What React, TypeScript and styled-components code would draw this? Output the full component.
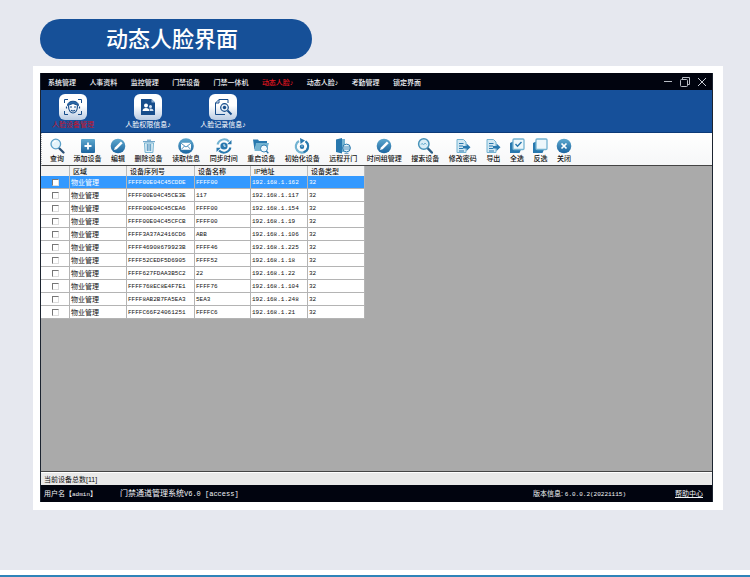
import React, { useState } from 'react';
import styled, { createGlobalStyle } from 'styled-components';

const GlobalStyle = createGlobalStyle`
  * { box-sizing: border-box; }
  body {
    margin: 0;
    background: #e6e8ef;
    font-family: "Liberation Sans", "Noto Sans CJK SC", sans-serif;
  }
  button { font: inherit; color: inherit; border: 0; padding: 0; background: none; cursor: pointer; }
`;

const Page = styled.div`
  min-height: 100vh;
  display: flex;
  flex-direction: column;
`;

const Content = styled.main`
  flex: 1;
  display: flex;
  flex-direction: column;
  padding: 19px 27px 60px 33px;
`;

const Heading = styled.h1`
  align-self: flex-start;
  width: 272px;
  height: 40px;
  margin: 0 0 7px 7px;
  padding-right: 8px;
  border-radius: 20px;
  background: #165098;
  color: #fff;
  font-size: 22px;
  font-weight: 500;
  line-height: 42px;
  text-align: center;
`;

const Card = styled.section`
  flex: 1;
  display: flex;
  padding: 7px 10px 8px 7px;
  background: #fff;
`;

const Window = styled.div`
  flex: 1;
  min-width: 0;
  display: flex;
  flex-direction: column;
  border: solid #1c2430;
  border-width: 0 1px;
  font-size: 7px;
  line-height: 9px;
  white-space: nowrap;
`;

const TitleBar = styled.header`
  display: flex;
  align-items: center;
  justify-content: space-between;
  height: 17px;
  padding: 1px 5px 0 7px;
  background: #01040f;
  color: #f2f4f8;
`;

const Menu = styled.nav`
  flex: 0 1 373px;
  display: flex;
  justify-content: space-between;
`;

const MenuItem = styled.button<{ $active?: boolean }>`
  color: ${(p) => (p.$active ? '#e01620' : 'inherit')};
  font-weight: 500;
`;

const Controls = styled.div`
  display: flex;
  gap: 7px;
  button { display: flex; }
`;

const Ribbon = styled.nav`
  display: flex;
  align-items: flex-start;
  gap: 11px;
  height: 43px;
  padding-top: 4px;
  background: #16509a;
  border-bottom: 1px solid #0c3a78;
`;

const RibbonItem = styled.button<{ $active?: boolean }>`
  display: flex;
  flex-direction: column;
  align-items: center;
  width: 64px;
  color: ${(p) => (p.$active ? '#c5142c' : '#fff')};
`;

const IconTile = styled.span`
  display: flex;
  align-items: center;
  justify-content: center;
  width: 28px;
  height: 26px;
  border-radius: 6px;
  background: linear-gradient(#fff 45%, #b9cbe2);
`;

const Toolbar = styled.div`
  height: 33px;
  padding: 5px 8px 0;
  border-left: 1px dotted #b8b8b8;
  border-bottom: 1px solid #444;
  background: linear-gradient(#fff, #f6f7f8);
  color: #111;
`;

const Tools = styled.div`
  display: flex;
  justify-content: space-between;
  max-width: 521px;
`;

const Tool = styled.button`
  display: flex;
  flex-direction: column;
  align-items: center;
  font-weight: 500;
  svg { margin: 0 -1px; }
`;

const Workspace = styled.div`
  flex: 1;
  background: #aaa;
  border-bottom: 1px solid #444;
`;

const Table = styled.table`
  width: 324px;
  table-layout: fixed;
  border-collapse: separate;
  border-spacing: 0;
  color: #111;
`;

const Column = styled.col<{ $width: number }>`
  width: ${(p) => p.$width}px;
`;

const HeadCell = styled.th`
  height: 10px;
  padding: 0 0 0 3px;
  border-right: 1px solid #bbb;
  background: #f3f3f3;
  font-weight: 500;
  line-height: 9px;
  text-align: left;
`;

const Row = styled.tr<{ $selected: boolean }>`
  background: ${(p) => (p.$selected ? '#3399ff' : '#fff')};
  color: ${(p) => (p.$selected ? '#fff' : '#111')};
`;

const Cell = styled.td`
  height: 13px;
  padding: 0 0 0 1px;
  border: solid #b4b4b4;
  border-width: 0 1px 1px 0;
  line-height: 11px;
  overflow: hidden;
`;

const CheckCell = styled(Cell)`
  padding: 0 0 0 11px;
`;

const Check = styled.input`
  appearance: none;
  display: block;
  width: 7px;
  height: 7px;
  margin: 0;
  border: 1px solid;
  border-color: #777 #ddd #ddd #777;
  background: #fff;
`;

const Code = styled.span`
  font-family: "Liberation Mono", monospace;
  font-size: 6px;
`;

const CountBar = styled.div`
  height: 13px;
  padding: 2px 3px;
  border-top: 1px solid #fff;
  background: #e9e9e9;
  color: #111;
`;

const Footer = styled.footer`
  display: flex;
  align-items: center;
  height: 17px;
  padding: 0 9px 0 3px;
  background: #01040f;
  color: #f2f4f8;
`;

const User = styled.span`
  width: 76px;
`;

const Product = styled.span`
  font-size: 8px;
  ${Code} { font-size: 7px; }
`;

const Version = styled.span`
  margin-left: auto;
`;

const Help = styled.a`
  margin-left: 49px;
  color: inherit;
  text-decoration: underline;
`;

const BottomRule = styled.div`
  height: 7px;
  background: #fff;
  border-bottom: 2px solid #2f83b8;
`;

const A = '#2878ae';
const L = '#73b3d2';

const toolIcons: Record<string, React.ReactNode> = {
  search: (
    <>
      <path d="M10 10l4.5 4.5" stroke="#2b4f74" strokeWidth="2.2" strokeLinecap="round" />
      <circle cx="6.8" cy="6" r="4.8" fill="#e4f3fa" stroke="#5a9fc8" strokeWidth="1.3" />
      <path d="M4 5.5a3 3 0 0 1 3-2.4" stroke="#fff" />
    </>
  ),
  add: (
    <>
      <rect x="1" y="1" width="14" height="14" rx="1" fill="url(#blue)" />
      <path d="M8 4.5v7M4.5 8h7" stroke="#fff" strokeWidth="1.8" />
    </>
  ),
  edit: (
    <>
      <circle cx="8" cy="8" r="7.3" fill="url(#blue)" />
      <path d="M4 12l.9-2.6 6-5.9 1.8 1.8-6 5.900z" fill="#fff" />
    </>
  ),
  trash: (
    <>
      <path d="M3.5 5h9l-.6 9.5H4.1z" fill="#e3f1f7" stroke={L} />
      <path d="M2 3.7h12M6 2.2h4M6.3 6v7M8 6v7M9.7 6v7" stroke={A} strokeWidth=".8" />
    </>
  ),
  mail: (
    <>
      <circle cx="8" cy="8" r="7.8" fill="url(#blue)" />
      <rect x="3" y="4.7" width="10" height="7" rx=".5" fill="#fff" />
      <path d="M3 5.2L8 9l5-3.8M3.3 11.400L6.600 8M12.700 11.400L9.400 8" stroke={A} strokeWidth=".8" />
    </>
  ),
  sync: (
    <>
      <path d="M1.5 6.500a6.800 6.800 0 0 1 11.500-3" stroke={L} strokeWidth="2" />
      <path d="M14.500 9.500a6.800 6.800 0 0 1-11.500 3" stroke={A} strokeWidth="2" />
      <path d="M15.500 2v4.200h-4.400zM.5 14V9.800h4.400z" fill={A} />
      <circle cx="8" cy="8" r="3.600" fill={A} />
      <path d="M8 6v2.200h1.700" stroke="#fff" strokeWidth=".9" />
    </>
  ),
  restart: (
    <>
      <path d="M0 1.500h5l1 1.500h8V6H3.500L1.500 12z" fill={A} />
      <path d="M3 5h13l-2.500 8H1.500z" fill={L} />
      <circle cx="11" cy="10.500" r="3.500" fill="#f1f9fd" stroke={A} strokeWidth=".9" />
      <path d="M13.300 13l2 2.300" stroke={A} strokeWidth="1.300" />
    </>
  ),
  init: (
    <>
      <path d="M5 3a6.200 6.200 0 1 0 6.500.3" stroke={L} strokeWidth="2.200" />
      <path d="M11.500 3.300A6.200 6.200 0 0 1 9.500 14.300" stroke={A} strokeWidth="2" />
      <path d="M6 0l5 2.500L6.500 6z" fill={A} />
      <circle cx="8" cy="8.800" r="2.200" fill={A} />
      <path d="M8 7.400v1.500" stroke="#fff" strokeWidth=".7" />
    </>
  ),
  door: (
    <>
      <path d="M1 1.500L7 0v15.500l-6-1.500z" fill={A} />
      <path d="M7 1h3v13H7z" fill={L} />
      <circle cx="11.500" cy="10" r="3.900" fill="#e1f1f8" stroke={A} />
      <path d="M8 9h7M8 11h7M9.500 15.300h4" stroke={A} strokeWidth=".8" />
    </>
  ),
  find: (
    <>
      <path d="M10.500 10l4.300 4.500" stroke="#2b5f86" strokeWidth="2.500" strokeLinecap="round" />
      <circle cx="6.800" cy="6" r="5.200" fill="#d9edf6" stroke="#4993b9" strokeWidth="1.500" />
      <path d="M4 6.700l1.200-1.500L6.500 7 8 5l1.500 1.500" stroke={L} />
    </>
  ),
  export: (
    <>
      <path d="M2 1.500h6.500L11 4v10.500H2z" fill="#d3e8f2" stroke={L} />
      <path d="M4 5.500h4.500M4 8h4M4 10.500h4M4 13h5" stroke={A} />
      <path d="M8 8h3.500V5.500l4 3.700-4 3.700v-2.500H8z" fill={A} />
    </>
  ),
  all: (
    <>
      <path d="M1 5l3-1.500v8h8L10.500 15H1z" fill={A} />
      <rect x="4" y="1" width="11" height="10.500" rx="1" fill="#edf7fb" stroke={L} strokeWidth="1.300" />
      <path d="M6.500 6l2 2.300 4-4.300" stroke={A} strokeWidth="1.400" />
    </>
  ),
  invert: (
    <>
      <path d="M1 5l3-1.500v8h8L10.500 15H1z" fill={A} />
      <rect x="4" y="1" width="11" height="10.500" rx="1" fill="#edf7fb" stroke={L} strokeWidth="1.300" />
    </>
  ),
  close: (
    <>
      <circle cx="8" cy="8" r="7.300" fill="url(#blue)" />
      <path d="M5.500 5.500l5 5M10.500 5.500l-5 5" stroke="#fff" strokeWidth="1.700" />
    </>
  ),
};

const ToolIcon = ({ name }: { name: string }) => (
  <svg width="16" height="16" viewBox="0 0 16 16" fill="none" aria-hidden="true">
    <defs>
      <linearGradient id="blue" x1="0" y1="0" x2="0" y2="1">
        <stop stopColor="#5fa9cf" />
        <stop offset="1" stopColor="#1c65a0" />
      </linearGradient>
    </defs>
    {toolIcons[name]}
  </svg>
);

const FaceIcon = () => (
  <svg width="20" height="18" viewBox="0 0 20 18" fill="none" stroke="#174d8b" aria-hidden="true">
    <path d="M1.500 5V1.500H5M15 1.500h3.500V5M18.500 13v3.500H15M5 16.500H1.500V13" />
    <path d="M4.500 7.500C4.500 1.800 15.500 1.800 15.500 7.500L14 7 10 5.500 6 7z" fill="#2a68a8" />
    <path d="M5.500 7.500c0 10 9 10 9 0M3.500 8.500v2M16.500 8.500v2M7 9h2M11 9h2M8 12.200c1 1 3 1 4 0" strokeWidth="1.200" />
  </svg>
);

const PeopleIcon = () => (
  <svg width="18" height="18" viewBox="0 0 18 18" aria-hidden="true">
    <path d="M2 1h10.500L16 4.500V17H2z" fill="#174d8b" />
    <path d="M12.500 1v3.500H16z" fill="#8eb0d4" />
    <circle cx="7" cy="7.500" r="2" fill="#fff" />
    <path d="M3.500 13c0-4 7-4 7 0z" fill="#fff" />
    <circle cx="11.500" cy="8.500" r="1.500" fill="#d6e3f1" />
    <path d="M11 13c0-1-.3-1.700-.7-2.200 2-.8 4.200 0 4.200 2.200z" fill="#d6e3f1" />
  </svg>
);

const RecordIcon = () => (
  <svg width="20" height="18" viewBox="0 0 20 18" fill="none" stroke="#174d8b" aria-hidden="true">
    <path d="M15 5V1.500H6L2.500 5v11.500H12M6 1.500V5H2.500" />
    <circle cx="11.500" cy="9.500" r="3.800" fill="#e5eef7" strokeWidth="1.200" />
    <circle cx="11.500" cy="9.500" r="1.700" fill="#174d8b" stroke="none" />
    <path d="M14.500 12.500l4 4" strokeWidth="2" />
  </svg>
);

const menu = ['系统管理', '人事资料', '监控管理', '门禁设备', '门禁一体机', '动态人脸♪', '动态人脸♪', '考勤管理', '锁定界面'];

const ribbon = [
  { label: '人脸设备管理', icon: <FaceIcon /> },
  { label: '人脸权限信息♪', icon: <PeopleIcon /> },
  { label: '人脸记录信息♪', icon: <RecordIcon /> },
];

const tools: [string, string][] = [
  ['search', '查询'], ['add', '添加设备'], ['edit', '编辑'], ['trash', '删除设备'],
  ['mail', '读取信息'], ['sync', '同步时间'], ['restart', '重启设备'], ['init', '初始化设备'],
  ['door', '远程开门'], ['edit', '时间组管理'], ['find', '搜索设备'], ['export', '修改密码'],
  ['export', '导出'], ['all', '全选'], ['invert', '反选'], ['close', '关闭'],
];

const columns = [29, 57, 68, 56, 57, 57];

const devices = [
  ['FFFF00E04C45CDDE', 'FFFF00', '192.168.1.162'],
  ['FFFF00E04C45CE3E', '117', '192.168.1.117'],
  ['FFFF00E04C45CEA6', 'FFFF00', '192.168.1.154'],
  ['FFFF00E04C45CFCB', 'FFFF00', '192.168.1.19'],
  ['FFFF3A37A2416CD6', 'ABB', '192.168.1.106'],
  ['FFFF46908679923B', 'FFFF46', '192.168.1.225'],
  ['FFFF52CEDF5D6905', 'FFFF52', '192.168.1.18'],
  ['FFFF627FDAA3B5C2', '22', '192.168.1.22'],
  ['FFFF768EC8E4F7E1', 'FFFF76', '192.168.1.104'],
  ['FFFF8AB2B7FA5EA3', '5EA3', '192.168.1.248'],
  ['FFFFC66F24061251', 'FFFFC6', '192.168.1.21'],
];

export default function App() {
  const [selected, setSelected] = useState(0);
  return (
    <Page>
      <GlobalStyle />
      <Content>
        <Heading>动态人脸界面</Heading>
        <Card>
          <Window>
            <TitleBar>
              <Menu>
                {menu.map((label, i) => (
                  <MenuItem key={i} $active={i === 5}>{label}</MenuItem>
                ))}
              </Menu>
              <Controls>
                <button aria-label="最小化">
                  <svg width="10" height="10" stroke="#b8bcc4"><path d="M1 4.500h8" /></svg>
                </button>
                <button aria-label="还原">
                  <svg width="10" height="10" fill="none" stroke="#b8bcc4">
                    <rect x=".5" y="2.500" width="7" height="7" rx="1" />
                    <path d="M2.500 2.500v-2h7v7h-2" />
                  </svg>
                </button>
                <button aria-label="关闭窗口">
                  <svg width="10" height="10" stroke="#c8ccd4"><path d="M1 1l8 8M9 1l-8 8" /></svg>
                </button>
              </Controls>
            </TitleBar>
            <Ribbon>
              {ribbon.map((item, i) => (
                <RibbonItem key={item.label} $active={i === 0}>
                  <IconTile>{item.icon}</IconTile>
                  {item.label}
                </RibbonItem>
              ))}
            </Ribbon>
            <Toolbar>
              <Tools>
                {tools.map(([icon, label]) => (
                  <Tool key={label}>
                    <ToolIcon name={icon} />
                    {label}
                  </Tool>
                ))}
              </Tools>
            </Toolbar>
            <Workspace>
              <Table>
                <colgroup>
                  {columns.map((width, i) => <Column key={i} $width={width} />)}
                </colgroup>
                <thead>
                  <tr>
                    <HeadCell aria-label="选择" />
                    <HeadCell>区域</HeadCell>
                    <HeadCell>设备序列号</HeadCell>
                    <HeadCell>设备名称</HeadCell>
                    <HeadCell>IP地址</HeadCell>
                    <HeadCell>设备类型</HeadCell>
                  </tr>
                </thead>
                <tbody>
                  {devices.map(([serial, name, ip], i) => (
                    <Row key={serial} $selected={i === selected} onClick={() => setSelected(i)}>
                      <CheckCell><Check type="checkbox" aria-label={serial} /></CheckCell>
                      <Cell>物业管理</Cell>
                      <Cell><Code>{serial}</Code></Cell>
                      <Cell><Code>{name}</Code></Cell>
                      <Cell><Code>{ip}</Code></Cell>
                      <Cell><Code>32</Code></Cell>
                    </Row>
                  ))}
                </tbody>
              </Table>
            </Workspace>
            <CountBar>当前设备总数[11]</CountBar>
            <Footer>
              <User>用户名【<Code>admin</Code>】</User>
              <Product>门禁通道管理系统<Code>V6.0 [access]</Code></Product>
              <Version>版本信息: <Code>6.0.0.2(20221115)</Code></Version>
              <Help href="#help">帮助中心</Help>
            </Footer>
          </Window>
        </Card>
      </Content>
      <BottomRule />
    </Page>
  );
}
